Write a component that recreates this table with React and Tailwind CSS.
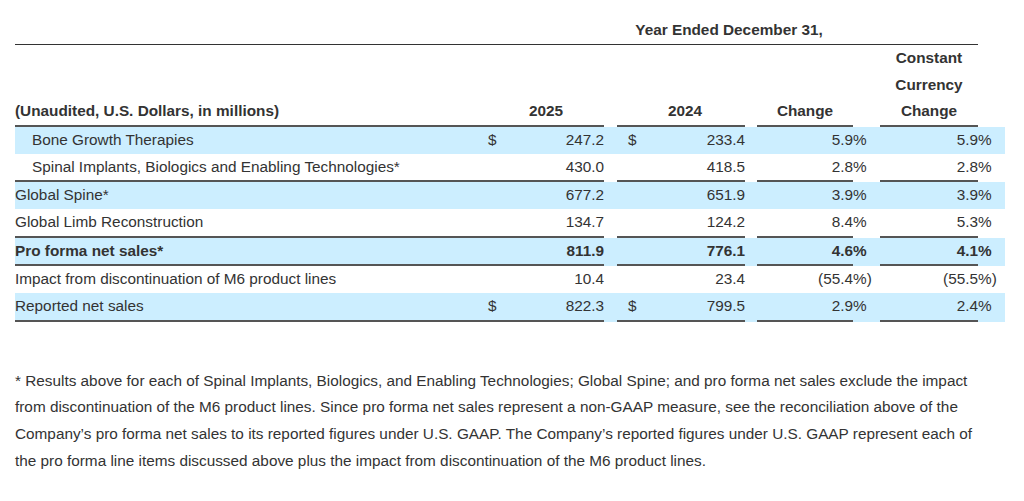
import React from 'react';

const grid =
  'grid grid-cols-[465px_30px_94px_13px_30px_98px_12px_96px_27px_98px_27px]';

const rows = [
  { label: 'Bone Growth Therapies', indent: true, blue: true, y25: '247.2', y24: '233.4', dollar: true, chg: '5.9', chgS: '%', cc: '5.9', ccS: '%' },
  { label: 'Spinal Implants, Biologics and Enabling Technologies*', indent: true, line: true, y25: '430.0', y24: '418.5', chg: '2.8', chgS: '%', cc: '2.8', ccS: '%' },
  { label: 'Global Spine*', blue: true, y25: '677.2', y24: '651.9', chg: '3.9', chgS: '%', cc: '3.9', ccS: '%' },
  { label: 'Global Limb Reconstruction', line: true, y25: '134.7', y24: '124.2', chg: '8.4', chgS: '%', cc: '5.3', ccS: '%' },
  { label: 'Pro forma net sales*', blue: true, bold: true, line: true, y25: '811.9', y24: '776.1', chg: '4.6', chgS: '%', cc: '4.1', ccS: '%' },
  { label: 'Impact from discontinuation of M6 product lines', y25: '10.4', y24: '23.4', chg: '(55.4', chgS: '%)', cc: '(55.5', ccS: '%)' },
  { label: 'Reported net sales', blue: true, line: true, dollar: true, y25: '822.3', y24: '799.5', chg: '2.9', chgS: '%', cc: '2.4', ccS: '%' },
];

function Row({ r }) {
  // bordered cells get the rule, the gap cells stay clear
  const rule = r.line ? 'border-b-2 border-[#555]' : '';
  return (
    <div
      className={`${grid} ${r.line ? 'h-[28.67px]' : 'h-[26.67px]'} ${
        r.blue ? 'bg-[#cceeff]' : ''
      } ${r.bold ? 'font-bold' : ''}`}
    >
      <div className={`${rule} ${r.indent ? 'pl-[17px]' : ''} whitespace-nowrap`}>{r.label}</div>
      <div className={`${rule} pl-2`}>{r.dollar ? '$' : ''}</div>
      <div className={`${rule} text-right`}>{r.y25}</div>
      <div />
      <div className={`${rule} pl-[11px]`}>{r.dollar ? '$' : ''}</div>
      <div className={`${rule} text-right`}>{r.y24}</div>
      <div />
      <div className={`${rule} text-right`}>{r.chg}</div>
      <div>{r.chgS}</div>
      <div className={`${rule} text-right`}>{r.cc}</div>
      <div>{r.ccS}</div>
    </div>
  );
}

export default function App() {
  return (
    <div className="min-h-screen bg-white pt-[17px] px-[15px] text-[15.33px] leading-[26.67px] text-[#333] font-['Liberation_Sans',Arial,sans-serif]">
      {/* ── Table ─────────────────────────────────────── */}
      <div className="w-[990px]">
        <div className={`${grid} h-[28px] font-bold`}>
          <div className="border-b border-[#333]" />
          <div className="col-span-9 border-b border-[#333] text-center">
            Year Ended December 31,
          </div>
          <div />
        </div>
        <div className={`${grid} h-[82px] font-bold items-end`}>
          <div className="h-full flex items-end border-b-2 border-[#555]">
            (Unaudited, U.S. Dollars, in millions)
          </div>
          <div className="col-span-2 h-full flex items-end justify-center pl-2 border-b-2 border-[#555]">
            2025
          </div>
          <div />
          <div className="col-span-2 h-full flex items-end justify-center pl-2 border-b-2 border-[#555]">
            2024
          </div>
          <div />
          <div className="h-full flex items-end justify-center border-b-2 border-[#555]">
            Change
          </div>
          <div />
          <div className="h-full flex flex-col items-center justify-end border-b-2 border-[#555]">
            <span>Constant</span>
            <span>Currency</span>
            <span>Change</span>
          </div>
          <div />
        </div>
        {rows.map((r) => (
          <Row key={r.label} r={r} />
        ))}
      </div>

      {/* ── Footnote ──────────────────────────────────── */}
      <p className="mt-[46px] w-[975px]">
        * Results above for each of Spinal Implants, Biologics, and Enabling Technologies; Global
        Spine; and pro forma net sales exclude the impact from discontinuation of the M6 product
        lines. Since pro forma net sales represent a non-GAAP measure, see the reconciliation above
        of the Company’s pro forma net sales to its reported figures under U.S. GAAP. The Company’s
        reported figures under U.S. GAAP represent each of the pro forma line items discussed above
        plus the impact from discontinuation of the M6 product lines.
      </p>
    </div>
  );
}
